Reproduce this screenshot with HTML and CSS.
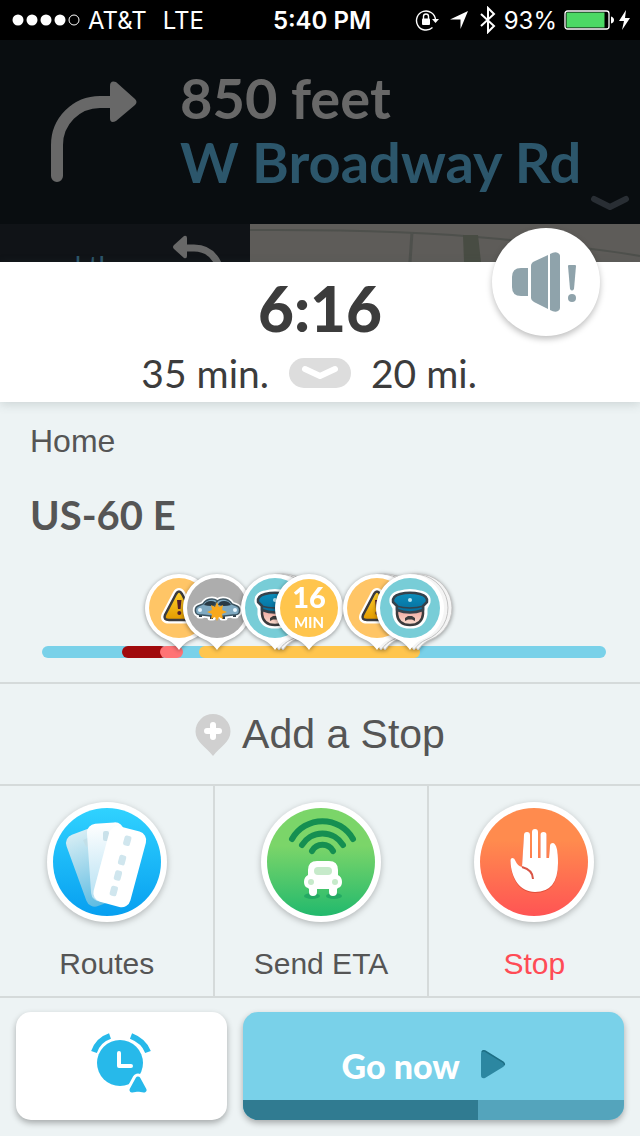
FILE: index.html
```html
<!DOCTYPE html>
<html lang="en">
<head>
    <meta charset="UTF-8">
    <meta name="viewport" content="width=device-width, initial-scale=1.0">
    <title>ETA</title>
    <link rel="stylesheet" href="styles.css">
</head>
<body>
    <!-- shared pin artwork -->
    <svg class="defs" width="0" height="0" aria-hidden="true">
        <defs>
            <linearGradient id="warnFill" x1="0" y1="0" x2="0" y2="1">
                <stop offset="0" stop-color="#ffd02a"/>
                <stop offset="1" stop-color="#e29a00"/>
            </linearGradient>
            <linearGradient id="hatFill" x1="0" y1="0" x2="0" y2="1">
                <stop offset="0" stop-color="#0b8fbd"/>
                <stop offset="1" stop-color="#066c9b"/>
            </linearGradient>
            <linearGradient id="faceFill" x1="0" y1="0" x2="0" y2="1">
                <stop offset="0" stop-color="#ef9f98"/>
                <stop offset="1" stop-color="#f9ddcf"/>
            </linearGradient>
            <path id="pinShape" d="M40 2a34 34 0 0 1 12 65.800c-5 2-8 5-12 10.200c-4-5.200-7-8.200-12-10.200A34 34 0 0 1 40 2z"/>
            <g id="warn">
                <path d="M37 22q3-5 6 0l11 21q2 5-4 5H30q-6 0-4-5z" fill="#fff" stroke="#fff" stroke-width="7" stroke-linejoin="round"/>
                <path d="M37 22q3-5 6 0l11 21q2 5-4 5H30q-6 0-4-5z" fill="url(#warnFill)" stroke="#3b3b3d" stroke-width="2.500"/>
                <path d="M38 28h4.500l-1 9h-2.500z" fill="#52202c"/>
                <circle cx="40.300" cy="41" r="2" fill="#52202c"/>
            </g>
            <g id="cop">
                <path d="M23 30q-1-6 7-8q10-3 20 0q8 2 7 8l-3 6v6q-2 11-14 11T26 42v-6z" fill="#fff" stroke="#fff" stroke-width="7" stroke-linejoin="round"/>
                <path d="M27 36v6q1 11 13 11t13-11v-6z" fill="url(#faceFill)" stroke="#3b3b3d" stroke-width="2.500"/>
                <path d="M23 30q-1-6 7-8q10-2.500 20 0q8 2 7 8l-4 4v4q-13 5-26 0v-4z" fill="url(#hatFill)" stroke="#35424c" stroke-width="2.500" stroke-linejoin="round"/>
                <path d="M26 34q14 4 28 0" fill="none" stroke="#35424c" stroke-width="1.500"/>
                <circle cx="40" cy="28" r="2" fill="#b4e6f5"/>
                <path d="M35 49v-3l3-2h4l3 2v3l-3-1.500h-4z" fill="#3b3b3d"/>
            </g>
            <path id="carBody" d="M19 41q-2-5 2-7l5-2q3-5 9-5 6 0 8 6v9q-4 3-9 2l-9-1q-5 0-6-2z"/>
            <g id="car">
                <path d="M22 42h3v3h-3zM33 43h3v4h-3z" fill="#2f3e48"/>
                <use href="#carBody" fill="#7fa9c1" stroke="#3c5461" stroke-width="1.500"/>
                <path d="M27 33q2-4 7-4 5 0 6 4-6 2-13 0z" fill="#293a45"/>
                <circle cx="23" cy="38" r="2" fill="#e9f7ff"/>
            </g>
            <g id="crash">
                <g fill="#fff" stroke="#fff" stroke-width="5" stroke-linejoin="round">
                    <use href="#carBody"/>
                    <use href="#carBody" transform="translate(81 0) scale(-1 1)"/>
                    <path d="M22 42h3v2h-3zM33 43h3v3h-3zM56 42h3v2h-3zM45 43h3v3h-3z"/>
                </g>
                <use href="#car"/>
                <use href="#car" transform="translate(81 0) scale(-1 1)"/>
                <path d="M40 30l2 5 4-2-1 5 5 2-5 2 1 5-4-2-2 4-2-4-4 2 1-5-5-2 5-2-1-5 4 2z" fill="#f8a81d"/>
            </g>
        </defs>
    </svg>

    <div class="screen">
        <header class="status-bar">
            <div class="status-left">
                <svg width="68" height="12" viewBox="0 0 68 12" fill="#fff">
                    <circle cx="6" cy="6" r="5.500"/><circle cx="20" cy="6" r="5.500"/><circle cx="34" cy="6" r="5.500"/><circle cx="48" cy="6" r="5.500"/>
                    <circle cx="62" cy="6" r="5" fill="none" stroke="#fff"/>
                </svg>
                <span class="carrier">AT&amp;T</span>
                <span class="network">LTE</span>
            </div>
            <time class="clock">5:40 PM</time>
            <div class="status-right">
                <div class="status-icons">
                    <svg width="24" height="24" viewBox="0 0 24 24" fill="none" stroke="#fff">
                        <path d="M17.500 19.500A9.500 9.500 0 1 1 20.500 12" stroke-width="1.400"/>
                        <path d="M17 11h7l-3.500 4z" fill="#fff" stroke="none"/>
                        <path d="M8.500 11V8.500a2.500 2.500 0 0 1 5 0V11" stroke-width="1.400"/>
                        <rect x="7" y="10.500" width="8" height="6.500" rx="1" fill="#fff" stroke="none"/>
                    </svg>
                    <svg width="20" height="20" viewBox="0 0 20 20" fill="#fff"><path d="M19 1L11.500 19V9.500H1z"/></svg>
                    <svg width="18" height="28" viewBox="0 0 18 28" fill="none" stroke="#fff" stroke-width="2"><path d="M2 8l13 12-6 6V2l6 6L2 20"/></svg>
                </div>
                <span>93%</span>
                <svg width="68" height="22" viewBox="0 0 68 22">
                    <rect x="1" y="2" width="44" height="18" rx="2.500" fill="none" stroke="#fff" stroke-width="1.300"/>
                    <rect x="2.500" y="3.500" width="38" height="15" fill="#4cd964"/>
                    <path d="M47 7.500q3 1 3 3.500t-3 3.500z" fill="#fff"/>
                    <path d="M62 1l-7 11h5l-2 9 8-12h-5z" fill="#fff"/>
                </svg>
            </div>
        </header>

        <section class="turn">
            <svg class="turn-arrow" width="88" height="104" viewBox="0 0 88 104">
                <path d="M7 96V65A43 43 0 0 1 50 22h15" fill="none" stroke="#686868" stroke-width="12" stroke-linecap="round"/>
                <path d="M60 6q0-6 6-4l19 17q3 3 0 6L66 41q-6 3-6-3z" fill="#686868"/>
            </svg>
            <div class="turn-text">
                <div class="turn-distance">850 feet</div>
                <div class="turn-street">W Broadway Rd</div>
            </div>
            <svg class="turn-more" width="40" height="18" viewBox="0 0 40 18"><path d="M4 5l16 8 16-8" fill="none" stroke="#292e34" stroke-width="6" stroke-linecap="round" stroke-linejoin="round"/></svg>
        </section>

        <section class="peek">
            <div class="then">
                <span>and then</span>
                <svg width="56" height="30" viewBox="0 0 56 30">
                    <path d="M11 14h11q18 0 25 18" fill="none" stroke="#686868" stroke-width="7"/>
                    <path d="M15 4q0-3-3-2L2 11q-2 2 0 4l10 9q3 1 3-2z" fill="#686868"/>
                </svg>
            </div>
            <svg class="map" viewBox="0 0 390 38" preserveAspectRatio="none">
                <rect width="390" height="38" fill="#5e5c59"/>
                <path d="M0 6q150-1 250 9t140 17" fill="none" stroke="#4e504c" stroke-width="2"/>
                <path d="M162 8l-2 30" stroke="#4e504c" stroke-width="3"/>
                <path d="M213 11h15l3 27h-17z" fill="#484c43"/>
            </svg>
        </section>

        <section class="summary">
            <div class="arrival">6:16</div>
            <div class="trip">
                <span class="trip-time">35 min.</span>
                <button class="collapse" aria-label="Collapse">
                    <svg width="38" height="16" viewBox="0 0 38 16"><path d="M4 4l15 7 15-7" fill="none" stroke="#fff" stroke-width="6" stroke-linecap="round" stroke-linejoin="round"/></svg>
                </button>
                <span class="trip-distance">20 mi.</span>
            </div>
            <button class="sound" aria-label="Sound alerts">
                <svg width="66" height="62" viewBox="0 0 66 62" fill="#8fa3ab">
                    <path d="M17 17v28h-7q-9 0-9-9V26q0-9 9-9z"/>
                    <path d="M20 15q0-3 3-4.500L37 4v54L23 51q-3-1.500-3-4z"/>
                    <path d="M39 3q5-3 8-1 2 1 2 3v52q0 2-2 3-3 2-8-1z"/>
                    <path d="M57 15q0-1 1-1h6q1 0 1 1l-2 23q-2 3-4 0z"/>
                    <circle cx="61" cy="47" r="4"/>
                </svg>
            </button>
        </section>

        <section class="route">
            <p class="destination">Home</p>
            <h1 class="via">US-60 E</h1>
            <div class="timeline">
                <div class="bar">
                    <span class="jam heavy" style="left: 14.2%; width: 8%"></span>
                    <span class="jam medium" style="left: 20.9%; width: 4.1%"></span>
                    <span class="jam light" style="left: 27.8%; width: 39.2%"></span>
                </div>
                <svg class="pin" style="left: 24.3%" viewBox="0 0 90 84">
                    <use href="#pinShape" fill="#fff"/>
                    <circle cx="40" cy="36" r="30" fill="#ffc566"/>
                    <use href="#warn"/>
                </svg>
                <svg class="pin" style="left: 31.1%" viewBox="0 0 90 84">
                    <use href="#pinShape" fill="#fff"/>
                    <circle cx="40" cy="36" r="30" fill="#adadad"/>
                    <use href="#crash"/>
                </svg>
                <svg class="pin" style="left: 41.4%" viewBox="0 0 90 84">
                    <g fill="#f4f4f4" stroke="#bcbcbc">
                        <use href="#pinShape" x="8"/><use href="#pinShape" x="4"/>
                    </g>
                    <use href="#pinShape" fill="#fff"/>
                    <circle cx="40" cy="36" r="30" fill="#78cdd7"/>
                    <use href="#cop"/>
                </svg>
                <svg class="pin" style="left: 47.4%" viewBox="0 0 90 84">
                    <use href="#pinShape" fill="#fff"/>
                    <circle cx="40" cy="36" r="29" fill="#ffc54d"/>
                    <text class="pin-number" x="40" y="36">16</text>
                    <text class="pin-unit" x="40" y="56">MIN</text>
                </svg>
                <svg class="pin" style="left: 59.4%" viewBox="0 0 90 84">
                    <g fill="#f4f4f4" stroke="#bcbcbc">
                        <use href="#pinShape" x="8"/><use href="#pinShape" x="4"/>
                    </g>
                    <use href="#pinShape" fill="#fff"/>
                    <circle cx="40" cy="36" r="30" fill="#ffc566"/>
                    <use href="#warn"/>
                </svg>
                <svg class="pin" style="left: 65.2%" viewBox="0 0 90 84">
                    <g fill="#f4f4f4" stroke="#c4c4c4">
                        <use href="#pinShape" x="8"/><use href="#pinShape" x="4"/>
                    </g>
                    <use href="#pinShape" fill="#fff"/>
                    <circle cx="40" cy="36" r="30" fill="#78cdd7"/>
                    <use href="#cop"/>
                </svg>
            </div>
        </section>

        <button class="add-stop">
            <svg width="36" height="42" viewBox="0 0 36 42">
                <path d="M18 0a17.500 17.500 0 0 1 17.500 17.500C35.500 28 25 33 18 42C11 33 .5 28 .5 17.500A17.500 17.500 0 0 1 18 0z" fill="#d0d0d0"/>
                <path d="M18 11v12M12 17h12" stroke="#fff" stroke-width="6" stroke-linecap="round"/>
            </svg>
            Add a Stop
        </button>

        <nav class="actions">
            <button class="action">
                <svg class="action-icon" viewBox="0 0 120 120">
                    <defs>
                        <linearGradient id="blue" x1="0" y1="0" x2="0" y2="1"><stop offset="0" stop-color="#30d2ff"/><stop offset="1" stop-color="#079ff0"/></linearGradient>
                        <linearGradient id="cardBack" x1="0" y1="0" x2="0" y2="1"><stop offset="0" stop-color="#d6edf4"/><stop offset="1" stop-color="#5fbce2"/></linearGradient>
                        <linearGradient id="cardMid" x1="0" y1="0" x2="0" y2="1"><stop offset="0" stop-color="#fff"/><stop offset="1" stop-color="#b2dff2"/></linearGradient>
                    </defs>
                    <circle cx="60" cy="60" r="60" fill="#fff"/>
                    <circle cx="60" cy="60" r="54" fill="url(#blue)"/>
                    <rect x="28" y="27" width="35" height="76" rx="9" fill="url(#cardBack)" transform="rotate(-20 47 64)"/>
                    <path d="M36 38l5-2 2 7-4 2z" fill="#c2dfe8"/>
                    <rect x="42" y="21" width="37" height="78" rx="9" fill="url(#cardMid)" transform="rotate(-4 60 60)"/>
                    <rect x="56" y="29" width="6" height="10" rx="2" fill="#c9e1ea"/>
                    <g transform="rotate(15 74 64)">
                        <rect x="54" y="26" width="38" height="78" rx="9" fill="#fff"/>
                        <g fill="#d0e6ee">
                            <rect x="70" y="33" width="7" height="10" rx="2"/>
                            <rect x="70" y="53" width="7" height="10" rx="2"/>
                            <rect x="70" y="69" width="7" height="10" rx="2"/>
                            <rect x="70" y="85" width="7" height="10" rx="2"/>
                        </g>
                    </g>
                </svg>
                Routes
            </button>
            <button class="action">
                <svg class="action-icon" viewBox="0 0 120 120">
                    <defs>
                        <linearGradient id="green" x1="0" y1="0" x2="0" y2="1"><stop offset=".35" stop-color="#7bd569"/><stop offset="1" stop-color="#22b96d"/></linearGradient>
                    </defs>
                    <circle cx="60" cy="60" r="60" fill="#fff"/>
                    <circle cx="60" cy="60" r="54" fill="url(#green)"/>
                    <g fill="none" stroke="#158f51" stroke-width="6" stroke-linecap="round">
                        <path d="M31 37a35 35 0 0 1 61 0"/>
                        <path d="M41 43a24 24 0 0 1 41 0"/>
                        <path d="M51 49a12 12 0 0 1 21 0"/>
                    </g>
                    <ellipse cx="51" cy="94" rx="8" ry="3" fill="#24a963"/>
                    <ellipse cx="73" cy="94" rx="8" ry="3" fill="#24a963"/>
                    <path d="M47 73v-5q0-9 9-9h12q9 0 9 9v5q4 2 4 7t-4 6l-1 1v3a4 4 0 0 1-8 0v-3H56v3a4 4 0 0 1-8 0v-3l-1-1q-4-1-4-6t4-7z" fill="#fff"/>
                    <rect x="53" y="65" width="18" height="8" rx="4" fill="#c6eaca"/>
                    <circle cx="50" cy="80" r="3" fill="#c6eaca"/>
                    <circle cx="74" cy="80" r="3" fill="#c6eaca"/>
                </svg>
                Send ETA
            </button>
            <button class="action action-stop">
                <svg class="action-icon" viewBox="0 0 120 120">
                    <defs>
                        <linearGradient id="red" x1="0" y1="0" x2="0" y2="1"><stop offset=".3" stop-color="#ff8b4e"/><stop offset="1" stop-color="#ff5454"/></linearGradient>
                        <path id="hand" d="M48 65l2-32q0-3 3-3t3 3v23h2V30q0-3 3-3t3 3v26h2.500V33q0-3 3-3t3 3v23H75l1-12q0-3 3-3 5 1 5 20 0 29-23 29C46 90 37 76 36.500 59q0-3 2-3t3 3q2 5 6.500 6z"/>
                    </defs>
                    <circle cx="60" cy="60" r="60" fill="#fff"/>
                    <circle cx="60" cy="60" r="54" fill="url(#red)"/>
                    <use href="#hand" y="1" fill="#e04e3a"/>
                    <use href="#hand" fill="#fff"/>
                    <path d="M48 65q11 3 11 12" fill="none" stroke="#d95445" stroke-width="2"/>
                </svg>
                Stop
            </button>
        </nav>

        <footer class="bottom">
            <button class="later" aria-label="Leave later">
                <svg width="60" height="62" viewBox="0 0 60 62">
                    <circle cx="29" cy="31" r="23" fill="#27b9ea"/>
                    <path d="M3 20Q7 8 19 4M40 4q13 5 17 16" fill="none" stroke="#27b9ea" stroke-width="6"/>
                    <path d="M28 21v13h12" fill="none" stroke="#fff" stroke-width="4" stroke-linecap="round" stroke-linejoin="round"/>
                    <path d="M47 47l6 11-6-1-6 1z" fill="#fff" stroke="#fff" stroke-width="11" stroke-linejoin="round"/>
                    <path d="M47 47l6 11-6-1-6 1z" fill="#27b9ea" stroke="#27b9ea" stroke-width="5" stroke-linejoin="round"/>
                </svg>
            </button>
            <button class="go">
                <span class="go-label">
                    Go now
                    <svg width="26" height="30" viewBox="0 0 26 30">
                        <path d="M1 4q0-4 4-3l18 11q3 3 0 5L5 28q-4 1-4-3z" fill="#2c87a1"/>
                        <path d="M2 2q1-2 3-1l18 11q2 2 1 3" fill="none" stroke="#1d6f85" stroke-width="1.500"/>
                    </svg>
                </span>
                <span class="countdown"><span class="countdown-fill" style="width: 61.7%"></span></span>
            </button>
        </footer>
    </div>
</body>
</html>
```
FILE: styles.css
```css
* {
    box-sizing: border-box;
}
body {
    margin: 0;
    background: #edf3f4;
    color: #555;
    font-family: "Liberation Sans", Arial, sans-serif;
}
button {
    margin: 0;
    padding: 0;
    border: none;
    background: none;
    color: inherit;
    font: inherit;
    cursor: pointer;
}
svg {
    display: block;
    flex-shrink: 0;
}
.defs {
    position: absolute;
}
.screen {
    min-height: 100vh;
    display: flex;
    flex-direction: column;
}

/* status bar */
.status-bar {
    height: 40px;
    padding: 0 8px 0 12px;
    display: grid;
    grid-template-columns: 1fr auto 1fr;
    align-items: center;
    background: #000;
    color: #fff;
    font-family: Inter, sans-serif;
    font-size: 24px;
}
.status-left, .status-right {
    display: flex;
    align-items: center;
    gap: 8px;
    white-space: nowrap;
}
.status-right {
    justify-content: flex-end;
    gap: 7px;
}
.status-icons {
    display: flex;
    align-items: center;
    gap: 10px;
}
.network {
    margin-left: 8px;
}
.clock {
    font-weight: 600;
}

/* next turn */
.turn {
    display: flex;
    padding: 26px 10px 12px 50px;
    background: #090d10;
    font-family: Lato, sans-serif;
    font-size: 56px;
    font-weight: 700;
    line-height: 64px;
}
.turn-arrow {
    margin-top: 14px;
}
.turn-text {
    flex: 1;
    padding: 0 0 18px 42px;
    white-space: nowrap;
}
.turn-distance {
    color: #686868;
}
.turn-street {
    color: #2c566b;
}
.turn-more {
    align-self: flex-end;
}
.peek {
    height: 38px;
    display: flex;
    overflow: hidden;
    background: #101317;
}
.then {
    width: 250px;
    padding: 10px 22px 0 36px;
    display: flex;
    justify-content: space-between;
    color: #2c566b;
    font-family: Lato, sans-serif;
    font-size: 28px;
    line-height: 64px;
}
.map {
    flex: 1;
    height: 38px;
    min-width: 0;
}

/* arrival summary */
.summary {
    position: relative;
    padding: 15px 0 6px;
    background: #fff;
    box-shadow: 0 2px 10px rgba(60, 80, 80, 0.2);
    color: #3c3c3c;
    font-family: Lato, sans-serif;
    text-align: center;
}
.arrival {
    font-size: 62px;
    font-weight: 900;
    line-height: 62px;
}
.trip {
    margin-top: 11px;
    display: grid;
    grid-template-columns: 1fr auto 1fr;
    align-items: center;
    gap: 20px;
    font-size: 39px;
    line-height: 46px;
}
.trip-time {
    text-align: right;
}
.trip-distance {
    text-align: left;
}
.collapse {
    width: 62px;
    height: 30px;
    display: flex;
    align-items: center;
    justify-content: center;
    border-radius: 15px;
    background: #ddd;
}
.sound {
    position: absolute;
    top: -34px;
    right: 40px;
    width: 108px;
    height: 108px;
    padding-right: 4px;
    display: flex;
    align-items: center;
    justify-content: center;
    border-radius: 50%;
    background: #fff;
    box-shadow: 0 3px 6px rgba(0, 0, 0, 0.25);
}

/* route and reports */
.route {
    padding: 19px 30px 24px;
}
.destination {
    margin: 0;
    font-size: 32px;
    line-height: 40px;
}
.via {
    margin: 30px 0 33px;
    font-family: Lato, sans-serif;
    font-size: 40px;
    font-weight: 700;
    line-height: 48px;
}
.timeline {
    position: relative;
    height: 86px;
    margin: 0 4px 0 12px;
    display: flex;
    align-items: flex-end;
}
.bar {
    position: relative;
    flex: 1;
    height: 12px;
    border-radius: 6px;
    background: #79d1e9;
}
.jam {
    position: absolute;
    top: 0;
    height: 12px;
    border-radius: 6px;
}
.heavy {
    background: #a00a0c;
}
.medium {
    background: #ff7375;
}
.light {
    background: #ffc54d;
}
.pin {
    position: absolute;
    top: 0;
    width: 90px;
    height: 84px;
    margin-left: -40px;
    filter: drop-shadow(0 1px 2px rgba(0, 0, 0, 0.4));
}
.pin-number, .pin-unit {
    fill: #fff;
    text-anchor: middle;
    font-family: Lato, sans-serif;
}
.pin-number {
    font-size: 29px;
    font-weight: 900;
}
.pin-unit {
    font-size: 15px;
    font-weight: 700;
}

.add-stop {
    flex: 1;
    min-height: 104px;
    padding-top: 1px;
    display: flex;
    align-items: center;
    justify-content: center;
    gap: 11px;
    border-top: 2px solid #d5dada;
    border-bottom: 2px solid #d5dada;
    font-size: 41px;
}

/* action grid */
.actions {
    display: grid;
    grid-template-columns: repeat(3, 1fr);
    border-bottom: 2px solid #d5dada;
}
.action {
    padding: 16px 0 14px;
    display: flex;
    flex-direction: column;
    align-items: center;
    gap: 24px;
    font-size: 30px;
    line-height: 36px;
}
.action + .action {
    border-left: 2px solid #d5dada;
}
.action-icon {
    width: 120px;
    height: 120px;
    filter: drop-shadow(0 2px 3px rgba(0, 0, 0, 0.25));
}
.action-stop {
    color: #ff4b55;
}

/* bottom buttons */
.bottom {
    display: grid;
    grid-template-columns: 5fr 9fr;
    gap: 16px;
    padding: 14px 16px 16px;
}
.later, .go {
    height: 108px;
    border-radius: 15px;
    box-shadow: 0 3px 6px rgba(0, 0, 0, 0.3);
}
.later {
    display: flex;
    align-items: center;
    justify-content: center;
    padding: 0 2px 6px 0;
    background: #fff;
}
.go {
    display: flex;
    flex-direction: column;
    overflow: hidden;
    background: #79d1e9;
    color: #fff;
    font-family: Lato, sans-serif;
    font-size: 34px;
    font-weight: 900;
}
.go-label {
    flex: 1;
    width: 100%;
    padding: 18px 20px 0 0;
    display: flex;
    align-items: center;
    justify-content: center;
    gap: 20px;
}
.countdown {
    width: 100%;
    height: 20px;
    display: flex;
    background: #54a4bc;
}
.countdown-fill {
    background: #307b91;
}
```
